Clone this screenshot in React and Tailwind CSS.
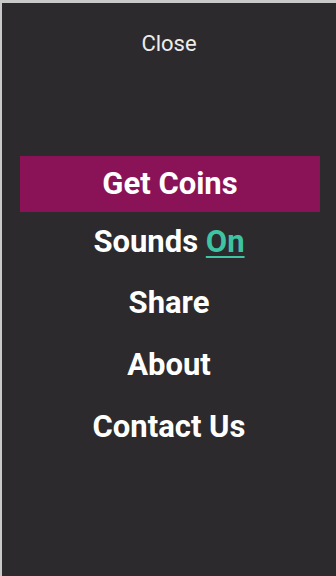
export default function App() {
  const items = ['Share', 'About', 'Contact Us'];

  return (
    <div
      className="h-[576px] w-[336px] overflow-hidden border-t-[3px] border-l-[2px] border-[#c9c9c9] bg-[#2c2a2c] text-white"
      style={{ fontFamily: 'Roboto, "Liberation Sans", sans-serif' }}
    >
      {/* Close */}
      <div className="flex h-[81px] items-center justify-center pb-[1px] text-[22px] text-[#ececec]">
        Close
      </div>

      {/* Menu */}
      <div className="mt-[72px] flex flex-col">
        <div className="ml-[18px] mr-[16px] flex h-[56px] items-center justify-center bg-[#8a1257] text-[31px] font-bold">
          Get Coins
        </div>
        <div className="flex h-[60px] items-center justify-center text-[31px] font-bold">
          Sounds&nbsp;
          <span className="text-[#3ec3a3] underline decoration-[2px] underline-offset-[4px]">On</span>
        </div>
        {items.map((item) => (
          <div key={item} className="flex h-[62px] items-center justify-center text-[31px] font-bold">
            {item}
          </div>
        ))}
      </div>
    </div>
  );
}
